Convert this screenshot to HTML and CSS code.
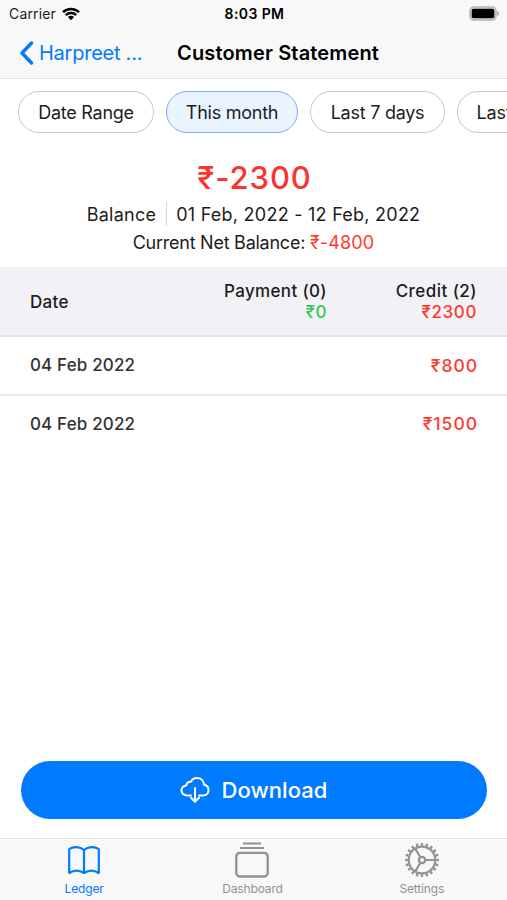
FILE: index.html
```
<!DOCTYPE html>
<html lang="en">
<head>
<meta charset="utf-8">
<title>Customer Statement</title>
<link rel="stylesheet" href="styles.css">
</head>

<body>
<header class="top">
  <div class="status">
    <div class="carrier">
      <span>Carrier</span>
      <svg class="wifi" viewBox="0 0 18 14" width="18" height="14">
        <path d="M1 5.2a11.4 11.4 0 0 1 16 0M3.8 8.1a7.4 7.4 0 0 1 10.4 0" fill="none" stroke="#000" stroke-width="2.5"/>
        <path d="M5.9 10.1a4.5 4.5 0 0 1 6.2 0L9 13.3z" fill="#000"/>
      </svg>
    </div>
    <div class="time">8:03 PM</div>
    <svg class="battery" viewBox="0 0 31 15" width="31" height="15">
      <rect x="1" y="1" width="26" height="13" rx="4" fill="#ddd" stroke="#b4b4b4" stroke-width="1.6"/>
      <rect x="2.700" y="2.700" width="22.600" height="9.600" rx="1.800" fill="#000"/>
      <path d="M28.3 5.2c2.3.5 2.3 4.1 0 4.6z" fill="#a5a5a5"/>
    </svg>
  </div>
  <nav class="nav">
    <a class="back">
      <svg viewBox="0 0 15 24" width="15" height="24"><path d="M12.5 2 3 12l9.500 10" fill="none" stroke="#007aff" stroke-width="3.400" stroke-linecap="round" stroke-linejoin="round"/></svg>
      <span>Harpreet ...</span>
    </a>
    <h1>Customer Statement</h1>
  </nav>
</header>

<div class="chips">
  <span class="chip range">Date Range</span>
  <span class="chip month active">This month</span>
  <span class="chip week">Last 7 days</span>
  <span class="chip more">Last 30 days</span>
</div>

<section class="summary">
  <div class="amount">₹-2300</div>
  <div class="period"><span class="label">Balance</span><span class="dates">01 Feb, 2022 - 12 Feb, 2022</span></div>
  <div class="net">Current Net Balance: <span class="red">₹-4800</span></div>
</section>

<section class="ledger">
  <div class="row head">
    <div class="date">Date</div>
    <div class="payment">Payment (0)<br><span class="green">₹0</span></div>
    <div class="credit">Credit (2)<br><span class="red">₹2300</span></div>
  </div>
  <div class="row">
    <div class="date">04 Feb 2022</div>
    <div class="payment"></div>
    <div class="credit red">₹800</div>
  </div>
  <div class="row">
    <div class="date">04 Feb 2022</div>
    <div class="payment"></div>
    <div class="credit red">₹1500</div>
  </div>
</section>

<div class="download">
  <svg viewBox="0 0 30 28" width="30" height="28" fill="none" stroke="#fff" stroke-width="2" stroke-linecap="round" stroke-linejoin="round">
    <path d="M11 19.500H7C3.700 19.500 1.500 17.400 1.500 14.500c0-2.700 1.900-4.700 4.700-5.100C6.700 6.800 8.600 5.500 10.800 5.700 12.100 3.400 14.200 2 17 2c4 0 6.800 2.800 7 6.800 2.700.6 4.500 2.700 4.500 5.400 0 3.100-2.300 5.300-5.500 5.300h-4"/>
    <path d="M15 12v13.500M11 21.800l4 4 4-4"/>
  </svg>
  <span>Download</span>
</div>

<footer class="tabs">
  <a class="tab active">
    <svg viewBox="0 0 36 36" width="36" height="36" fill="none" stroke="currentColor" stroke-width="2.200" stroke-linejoin="round">
      <path d="M18 8C14 4.300 7 4.300 3.200 7.200V31c4.500-2.900 10.300-2.900 14.800 0 4.500-2.900 10.300-2.900 14.800 0V7.200C29 4.300 22 4.300 18 8zV31"/>
    </svg>
    <span>Ledger</span>
  </a>
  <a class="tab dash">
    <svg viewBox="0 0 36 36" width="36" height="36" fill="none" stroke="currentColor" stroke-width="2">
      <path d="M9 1.500h18M6 6h24"/>
      <rect x="2.300" y="10.800" width="31.400" height="23.700" rx="3.500" stroke-width="2.300"/>
    </svg>
    <span>Dashboard</span>
  </a>
  <a class="tab gear">
    <svg viewBox="0 0 36 36" width="36" height="36" fill="none" stroke="currentColor" stroke-width="2.200">
      <circle cx="18" cy="18" r="15.600" stroke-width="2.800" pathLength="80" stroke-dasharray="2 2" stroke-dashoffset="1"/>
      <circle cx="18" cy="18" r="13.300"/>
      <circle cx="18" cy="18" r="3.200"/>
      <path d="M21.200 18h10.300M16.400 15.200 11 6.200M16.400 20.800 11 29.800"/>
    </svg>
    <span>Settings</span>
  </a>
</footer>
</body>
</html>
```
FILE: styles.css
```
* {
  box-sizing: border-box;
}

body {
  margin: 0;
  width: 507px;
  height: 900px;
  display: flex;
  flex-direction: column;
  overflow: hidden;
  background: #fff;
  color: #1c1c1e;
  font-family: Inter, "Noto Sans", sans-serif;
  white-space: nowrap;
}

.top {
  height: 79px;
  background: #f8f8f8;
  border-bottom: 1px solid #e3e3e5;
}

.status {
  display: grid;
  grid-template-columns: 1fr auto 1fr;
  align-items: center;
  height: 27px;
  padding: 0 7px 0 9px;
  font-size: 14px;
}

.carrier {
  display: flex;
  align-items: center;
  gap: 6px;
  letter-spacing: 0.15px;
}

.time {
  font-weight: 600;
  color: #000;
  letter-spacing: 0.4px;
}

.battery {
  justify-self: end;
}

.nav {
  display: flex;
  align-items: center;
  height: 51px;
  padding-left: 19px;
}

.back {
  display: flex;
  align-items: center;
  gap: 5px;
  width: 158px;
  color: #007aff;
  font-size: 20px;
  letter-spacing: -0.25px;
}

h1 {
  margin: 0;
  color: #000;
  font-size: 20px;
  font-weight: 600;
  letter-spacing: 0.15px;
}

.chips {
  display: flex;
  gap: 12px;
  padding: 12px 0 0 18px;
  overflow: hidden;
}

.chip {
  flex: none;
  height: 42px;
  line-height: 42px;
  border: 1px solid #c7c7cc;
  border-radius: 21px;
  text-align: center;
  font-size: 18px;
  letter-spacing: -0.25px;
}

.range {
  width: 136px;
}

.month {
  width: 132px;
}

.week {
  width: 135px;
}

.more {
  width: 145px;
}

.chip.active {
  background: #eaf4ff;
  border-color: #73b3fb;
}

.summary {
  height: 134px;
  padding-top: 25px;
  text-align: center;
  font-size: 18px;
}

.amount {
  height: 42px;
  padding-left: 2px;
  line-height: 40px;
  color: #fa3530;
  font-size: 31px;
  font-weight: 550;
  letter-spacing: 0.9px;
}

.period {
  display: flex;
  justify-content: center;
  height: 28px;
  line-height: 29px;
  letter-spacing: 0.25px;
}

.label {
  margin: 2px 0;
  line-height: 25px;
  padding-right: 10px;
  border-right: 1px solid #d1d1d6;
}

.dates {
  padding-left: 9px;
}

.net {
  line-height: 29px;
  letter-spacing: -0.25px;
}

.net .red {
  letter-spacing: 0.15px;
}

.red {
  color: #ff3b30;
}

.green {
  color: #34c759;
}

.row {
  display: flex;
  align-items: center;
  height: 57px;
  padding: 0 29px 0 30px;
  font-size: 17px;
  font-weight: 500;
  letter-spacing: 0.35px;
  line-height: 21px;
}

.row + .row .date {
  color: #333335;
  letter-spacing: 0.15px;
}

.row + .row + .row {
  height: 58px;
  border-top: 2px solid #ebebed;
}

.head {
  height: 70px;
  padding-top: 2px;
  background: #f1f1f6;
  border-bottom: 2px solid #e4e4e8;
}

.date {
  width: 150px;
}

.payment {
  width: 147px;
  text-align: right;
}

.credit {
  width: 150px;
  text-align: right;
}

.head .credit {
  letter-spacing: 0.45px;
}

.head .red,
.head .green {
  letter-spacing: 0.6px;
}

.credit.red {
  width: 151px;
  padding-bottom: 1px;
  font-size: 17.5px;
  letter-spacing: 1px;
}

.download {
  display: flex;
  align-items: center;
  justify-content: center;
  gap: 12px;
  height: 58px;
  margin: auto 20px 19px 21px;
  padding-right: 1px;
  border-radius: 29px;
  background: #007aff;
  color: #fff;
  font-size: 22px;
  font-weight: 500;
  letter-spacing: 0.05px;
}

.tabs {
  display: flex;
  height: 62px;
  background: #f8f8f8;
  border-top: 1px solid #e3e3e5;
}

.tab {
  display: flex;
  flex: 1;
  flex-direction: column;
  align-items: center;
  padding: 3px 1px 0 0;
  color: #929292;
  font-size: 12px;
  letter-spacing: -0.15px;
  line-height: 21px;
}

.tab.active {
  padding-right: 0;
  color: #007aff;
}
```
